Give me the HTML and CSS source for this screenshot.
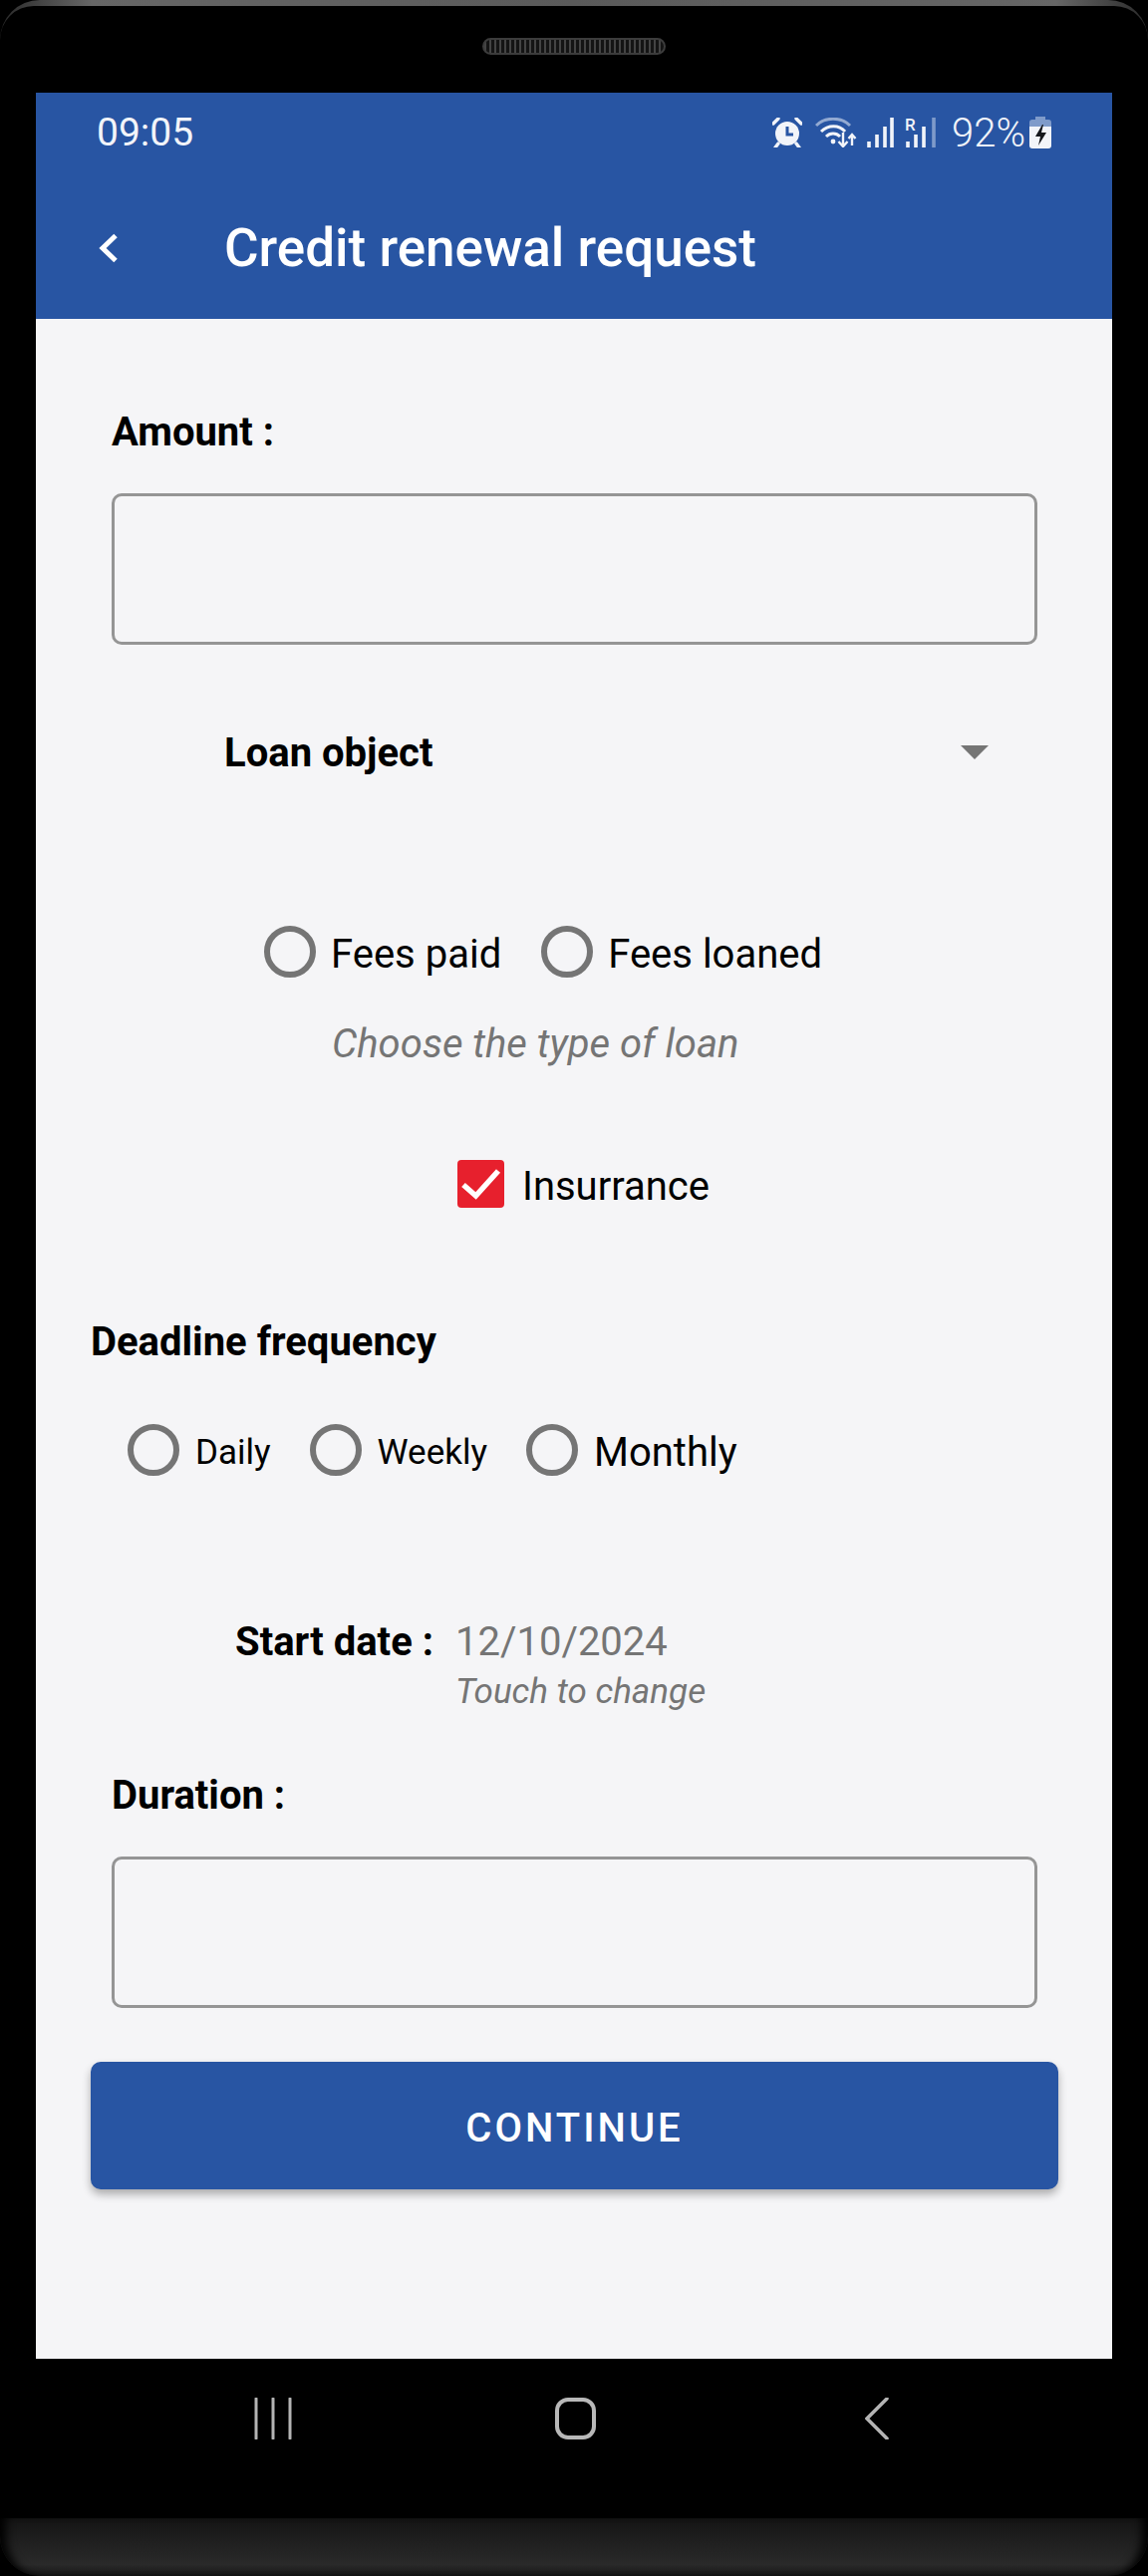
FILE: index.html
```html
<!DOCTYPE html>
<html lang="en">
<head>
    <meta charset="UTF-8">
    <meta name="viewport" content="width=device-width, initial-scale=1.0">
    <title>Credit renewal request</title>
    <link rel="stylesheet" href="styles.css">
</head>
<body>
    <div class="device">
        <div class="top-bezel">
            <div class="bezel-inner">
                <div class="speaker"></div>
            </div>
        </div>

        <div class="screen">
            <div class="app-header">
                <div class="status-bar">
                    <span class="clock">09:05</span>
                    <div class="status-icons">
                        <svg class="ic-alarm" width="30" height="30" viewBox="0 0 30 30">
                            <circle cx="15" cy="16" r="12" fill="#f2f4f9"/>
                            <path d="M15 9v8h6" fill="none" stroke="#2855a3" stroke-width="3"/>
                            <path d="M1 6l5-5M29 6l-5-5M6 26l-3 4M24 26l3 4" stroke="#f2f4f9" stroke-width="3.4" stroke-linecap="round"/>
                        </svg>
                        <svg class="ic-wifi" width="42" height="30" viewBox="0 0 42 30">
                            <path d="M1 8C10 -1 26 -1 35 8" fill="none" stroke="#93aad2" stroke-width="3"/>
                            <path d="M6 14C13 7 24 7 30 14M11 19C15 15 21 15 25 19" fill="none" stroke="#f2f4f9" stroke-width="3"/>
                            <circle cx="18" cy="24" r="2.4" fill="#f2f4f9"/>
                            <path d="M28 15v13M23.5 24l4.500 5 4.500-5M37 28V17M33.500 21l3.500-4 3.500 4" fill="none" stroke="#f2f4f9" stroke-width="2.400"/>
                        </svg>
                        <svg class="ic-signal" width="28" height="30" viewBox="0 0 28 30">
                            <path d="M3 30v-6M11 30V17M19 30V9M26 30V0" stroke="#f2f4f9" stroke-width="3.600"/>
                        </svg>
                        <div class="roaming">
                            <span class="roaming-r">R</span>
                            <svg width="32" height="30" viewBox="0 0 32 30">
                                <path d="M3 30v-6M11 30V17M19 30V9" stroke="#f2f4f9" stroke-width="3.600"/>
                                <path d="M29 30V0" stroke="#7f9bca" stroke-width="3.600"/>
                            </svg>
                        </div>
                        <span class="battery-text">92%</span>
                        <svg class="ic-battery" width="22" height="32" viewBox="0 0 22 32">
                            <path d="M6 0h10v3h3a3 3 0 0 1 3 3v4H0V6a3 3 0 0 1 3-3h3z" fill="#7f9bca"/>
                            <path d="M0 10h22v19a3 3 0 0 1-3 3H3a3 3 0 0 1-3-3z" fill="#f2f4f9"/>
                            <path d="M13 8l-7 12h5l-2 9 8-13h-5l2-8z" fill="#15171c"/>
                        </svg>
                    </div>
                </div>
                <div class="toolbar">
                    <svg class="back-arrow" width="24" height="32" viewBox="0 0 24 32">
                        <path d="M20 3.500L7 16l13 12.500" fill="none" stroke="#fff" stroke-width="5"/>
                    </svg>
                    <h1 class="toolbar-title">Credit renewal request</h1>
                </div>
            </div>

            <div class="form">
                <div class="field">
                    <label class="label">Amount :</label>
                    <div class="text-box"></div>
                </div>

                <div class="spinner">
                    <span class="spinner-text">Loan object</span>
                    <span class="spinner-arrow"></span>
                </div>

                <div class="radio-row loan-type">
                    <div class="radio"><span class="radio-dot"></span><span class="option-text">Fees paid</span></div>
                    <div class="radio"><span class="radio-dot"></span><span class="option-text">Fees loaned</span></div>
                </div>
                <p class="loan-hint">Choose the type of loan</p>

                <div class="insurance">
                    <span class="checkbox">
                        <svg width="47" height="48" viewBox="0 0 47 48">
                            <path d="M6 25l12.500 11L41 11" fill="none" stroke="#fff" stroke-width="5.500"/>
                        </svg>
                    </span>
                    <span class="option-text">Insurrance</span>
                </div>

                <h2 class="section-title">Deadline frequency</h2>
                <div class="radio-row frequency">
                    <div class="radio small"><span class="radio-dot"></span><span class="option-text">Daily</span></div>
                    <div class="radio small"><span class="radio-dot"></span><span class="option-text">Weekly</span></div>
                    <div class="radio"><span class="radio-dot"></span><span class="option-text">Monthly</span></div>
                </div>

                <div class="start-date">
                    <span class="label">Start date :</span>
                    <div>
                        <div class="date-value">12/10/2024</div>
                        <div class="date-hint">Touch to change</div>
                    </div>
                </div>

                <div class="field duration">
                    <label class="label">Duration :</label>
                    <div class="text-box"></div>
                </div>

                <button class="continue-btn">CONTINUE</button>
            </div>
        </div>

        <div class="nav-bar">
            <svg width="38" height="42" viewBox="0 0 38 42">
                <path d="M2 1v40M19 1v40M36 1v40" stroke="#b4b4b4" stroke-width="3" stroke-linecap="round"/>
            </svg>
            <svg width="41" height="42" viewBox="0 0 41 42">
                <rect x="2" y="2" width="37" height="38" rx="11" fill="none" stroke="#b8b8b8" stroke-width="4"/>
            </svg>
            <svg class="nav-back" width="24" height="42" viewBox="0 0 24 42">
                <path d="M22 1L2 21l20 20" fill="none" stroke="#b4b4b4" stroke-width="3.500" stroke-linecap="round"/>
            </svg>
        </div>
        <div class="chin"></div>
    </div>
</body>
</html>
```

FILE: styles.css
```css
* {
    box-sizing: border-box;
}

body {
    margin: 0;
    background-color: #000;
    font-family: Roboto, "Liberation Sans", sans-serif;
}

.device {
    width: 1152px;
    height: 2585px;
    overflow: hidden;
}

.top-bezel {
    height: 93px;
    padding-top: 6px;
    border-radius: 40px 40px 0 0;
    background: linear-gradient(90deg, #2a2a2a, #666 8%, #5a5a5a 50%, #666 92%, #2a2a2a);
}

.bezel-inner {
    height: 87px;
    padding: 32px 0 0 484px;
    border-radius: 34px 34px 0 0;
    background-color: #000;
}

.speaker {
    width: 184px;
    height: 17px;
    border: 2px solid #3c3c3c;
    border-radius: 9px;
    background: repeating-linear-gradient(90deg, #444 0 2px, #141414 2px 5px);
}

.screen {
    width: 1080px;
    height: 2274px;
    margin-left: 36px;
    background-color: #f5f5f7;
}

.app-header {
    height: 227px;
    background-color: #2855a3;
    color: #fff;
}

.status-bar {
    display: flex;
    justify-content: space-between;
    align-items: center;
    height: 80px;
    padding: 0 61px 0 61px;
}

.clock {
    font-size: 39px;
    color: #f2f4f9;
}

.status-icons {
    display: flex;
    align-items: center;
}

.ic-wifi {
    margin-left: 13px;
}

.ic-signal {
    margin-left: 9px;
}

.roaming {
    display: flex;
    align-items: flex-end;
    width: 32px;
    height: 30px;
    margin-left: 11px;
    position: relative;
}

.roaming-r {
    position: absolute;
    left: 0;
    top: -3px;
    font-size: 17px;
    font-weight: 500;
    color: #f2f4f9;
}

.battery-text {
    margin-left: 15px;
    font-size: 40px;
    font-weight: 300;
    color: #f2f4f9;
}

.ic-battery {
    margin-left: 4px;
}

.toolbar {
    display: flex;
    align-items: center;
    height: 147px;
    padding: 5px 0 0 60px;
}

.back-arrow {
    flex: none;
}

.toolbar-title {
    margin: 0 0 0 105px;
    font-size: 53px;
    font-weight: 500;
}

.form {
    padding: 90px 54px 0 55px;
}

.label {
    display: block;
    font-size: 40px;
    font-weight: 700;
    color: #000;
}

.field {
    padding: 0 21px;
}

.text-box {
    height: 152px;
    margin-top: 38px;
    border: 3px solid #959595;
    border-radius: 10px;
}

.spinner {
    display: flex;
    align-items: center;
    justify-content: space-between;
    height: 60px;
    margin-top: 78px;
    padding: 0 70px 0 134px;
}

.spinner-text {
    font-size: 40px;
    font-weight: 700;
}

.spinner-arrow {
    width: 0;
    height: 0;
    border-left: 14px solid transparent;
    border-right: 14px solid transparent;
    border-top: 14px solid #757575;
}

.radio-row {
    display: flex;
    align-items: center;
}

.radio {
    display: flex;
    align-items: center;
    font-size: 40px;
    color: #000;
}

.radio.small {
    font-size: 35px;
}

.radio.small + .radio {
    margin-left: 2px;
}

.radio-dot {
    flex: none;
    width: 52px;
    height: 52px;
    margin-right: 16px;
    border: 6px solid #757575;
    border-radius: 50%;
}

.option-text {
    padding-top: 5px;
}

.loan-type {
    gap: 40px;
    margin-top: 144px;
    padding-left: 174px;
}

.loan-type .radio-dot {
    margin-right: 15px;
}

.loan-hint {
    margin: 43px 0 0 242px;
    font-size: 40px;
    font-style: italic;
    color: #757575;
}

.insurance {
    display: flex;
    align-items: center;
    margin-top: 91px;
    padding-left: 368px;
    font-size: 40px;
}

.checkbox {
    display: block;
    width: 47px;
    height: 48px;
    margin-right: 18px;
    border-radius: 4px;
    background-color: #e7202d;
}

.checkbox svg {
    display: block;
}

.section-title {
    margin: 109px 0 0;
    font-size: 40px;
    font-weight: 700;
}

.frequency {
    gap: 37px;
    margin-top: 59px;
    padding-left: 37px;
}

.start-date {
    display: flex;
    gap: 22px;
    margin-top: 143px;
    padding-left: 145px;
}

.date-value {
    font-size: 40px;
    color: #757575;
}

.date-hint {
    margin-top: 6px;
    font-size: 35px;
    font-style: italic;
    color: #757575;
}

.duration {
    margin-top: 60px;
}

.continue-btn {
    display: block;
    width: 971px;
    height: 128px;
    margin-top: 54px;
    padding-top: 5px;
    border: none;
    border-radius: 10px;
    background-color: #2855a3;
    box-shadow: 0 5px 9px rgba(0, 0, 0, 0.3);
    color: #fff;
    font-family: Roboto, sans-serif;
    font-size: 40px;
    font-weight: 500;
    letter-spacing: 3px;
}

.nav-bar {
    display: flex;
    align-items: center;
    gap: 264px;
    height: 160px;
    padding: 0 0 40px 255px;
}

.nav-back {
    margin-left: 6px;
}

.chin {
    height: 58px;
    border-radius: 0 0 40px 40px;
    background: linear-gradient(#141414, #2a2a2a 80%, #161616);
    box-shadow: inset 12px 0 10px -6px #000, inset -12px 0 10px -6px #000;
}
```
